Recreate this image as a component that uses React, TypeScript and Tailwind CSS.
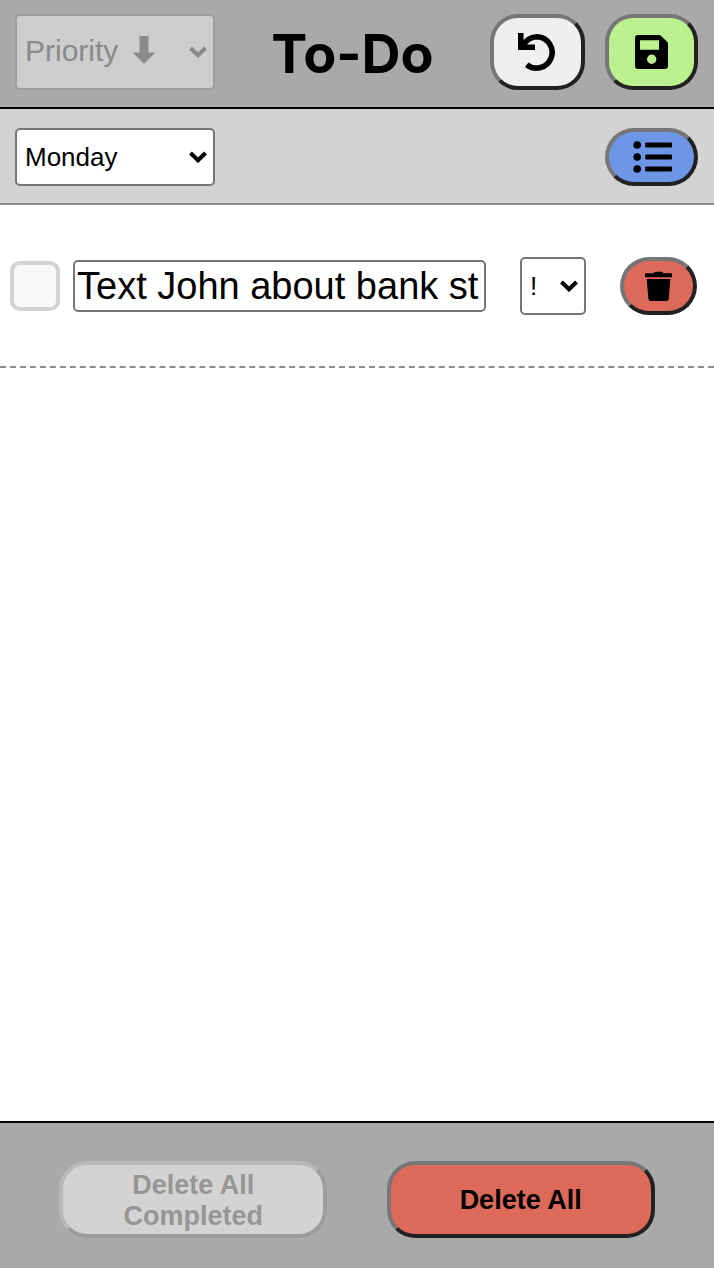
import { useState } from "react";
import type { ReactNode } from "react";

const outset =
  "flex items-center justify-center border-4 border-t-[#767676] border-l-[#767676] border-r-[#212121] border-b-[#212121]";

function Chevron() {
  return (
    <svg
      viewBox="0 0 18 12"
      aria-hidden="true"
      className="pointer-events-none absolute top-1/2 right-2 h-3 w-[18px] -translate-y-1/2"
    >
      <path d="M1.5 2 L9 9.3 L16.5 2" fill="none" stroke="currentColor" strokeWidth="4" />
    </svg>
  );
}

function DownArrow() {
  return (
    <svg
      viewBox="0 0 22 28"
      aria-hidden="true"
      className="pointer-events-none absolute top-[22px] left-[118px] h-7 w-[22px]"
    >
      <path d="M6.500 0 H15.500 V16.500 H22 L11 28 L0 16.500 H6.500 Z" fill="currentColor" />
    </svg>
  );
}

function UndoIcon() {
  return (
    <svg viewBox="0 0 38 38" className="h-[38px] w-[38px]" aria-hidden="true">
      <path
        d="M4 14 C7.500 7.500 12.500 3.700 19.300 3.700 A15.700 15.700 0 1 1 8.700 31.700"
        fill="none"
        stroke="currentColor"
        strokeWidth="5.600"
      />
      <path d="M0 0 H5.600 V11.500 H17 V17 H0 Z" fill="currentColor" />
    </svg>
  );
}

function SaveIcon() {
  return (
    <svg viewBox="0 0 33 34" className="h-[34px] w-[33px]" aria-hidden="true">
      <path
        fillRule="evenodd"
        fill="currentColor"
        d="M3 0 H24 Q25.300 0 26.200 0.900 L32.100 6.800 Q33 7.700 33 9 V31 A3 3 0 0 1 30 34 H3 A3 3 0 0 1 0 31 V3 A3 3 0 0 1 3 0 Z M5 5.300 V14.700 H24 V5.300 Z M16.700 19.500 A4.700 4.700 0 1 0 16.700 28.900 A4.700 4.700 0 1 0 16.700 19.500 Z"
      />
    </svg>
  );
}

function ListIcon() {
  return (
    <svg viewBox="0 0 40 32" className="h-8 w-10" aria-hidden="true" fill="currentColor">
      <circle cx="5.200" cy="4" r="3.800" />
      <circle cx="5.200" cy="16" r="3.800" />
      <circle cx="5.200" cy="28" r="3.800" />
      <rect x="13.300" y="1.500" width="26.700" height="5" rx="0.800" />
      <rect x="13.300" y="13.500" width="26.700" height="5" rx="0.800" />
      <rect x="13.300" y="25.500" width="26.700" height="5" rx="0.800" />
    </svg>
  );
}

function TrashIcon() {
  return (
    <svg viewBox="0 0 27 30" className="h-[30px] w-[27px]" aria-hidden="true" fill="currentColor">
      <path d="M1 2.300 H8.500 Q9.200 0.800 10.500 0.800 H16.500 Q17.800 0.800 18.500 2.300 H26 Q27 2.300 27 3.300 V6.200 H0 V3.300 Q0 2.300 1 2.300 Z" />
      <path d="M1.700 8 H25.300 L23.800 27.500 Q23.500 30 21.200 30 H6 Q3.700 30 3.400 27.500 Z" />
    </svg>
  );
}

function IconButton({ label, className, children }: { label: string; className: string; children: ReactNode }) {
  return (
    <button type="button" aria-label={label} className={`${outset} ${className}`}>
      {children}
    </button>
  );
}

export default function App() {
  const [text, setText] = useState("Text John about bank st");

  return (
    <div className="flex min-h-screen flex-col bg-white font-['Liberation_Sans',Arial,sans-serif] text-black">
      <header className="flex items-center justify-between border-b-2 border-black bg-[#a9a9a9] pt-[14px] pr-4 pb-[17px] pl-[15px]">
        <div className="relative w-[200px] text-[#8a8a8a]">
          <select
            aria-label="Sort by"
            disabled
            className="h-[76px] w-full appearance-none rounded-[5px] border-2 border-[#9e9e9e] bg-[#cdcdcd] pb-1 pl-2 text-[30px] opacity-100"
          >
            <option>Priority</option>
          </select>
          <DownArrow />
          <Chevron />
        </div>
        <h1 className="pt-1 font-[Inter,sans-serif] text-[54px] leading-[72px] font-bold">To-Do</h1>
        <div className="flex gap-5">
          <IconButton label="Undo" className="h-[76px] w-[95px] rounded-[28px] bg-[#efefef]">
            <UndoIcon />
          </IconButton>
          <IconButton label="Save" className="h-[76px] w-[93px] rounded-[28px] bg-[#bbf28f]">
            <SaveIcon />
          </IconButton>
        </div>
      </header>

      <nav className="flex items-center justify-between border-b-2 border-[#8c8c8c] bg-[#d3d3d3] pt-[19px] pr-4 pb-[17px] pl-[15px]">
        <div className="relative w-[200px]">
          <select
            aria-label="Day"
            className="h-[58px] w-full appearance-none rounded-[5px] border-2 border-[#767676] bg-white pl-2 text-[26px]"
          >
            <option>Monday</option>
          </select>
          <Chevron />
        </div>
        <IconButton label="Lists" className="h-[58px] w-[93px] rounded-[29px] bg-[#6e96e6]">
          <ListIcon />
        </IconButton>
      </nav>

      <main className="flex-1">
        <ul>
          <li className="flex items-center border-b-2 border-dashed border-[#8c8c8c] pt-[52px] pb-[51px] pr-[17px] pl-[10px]">
            <input
              type="checkbox"
              aria-label="Completed"
              className="h-[50px] w-[50px] shrink-0 appearance-none rounded-[10px] border-4 border-[#d3d3d3] bg-[#f8f8f8]"
            />
            <input
              type="text"
              aria-label="Task"
              value={text}
              onChange={(e) => setText(e.target.value)}
              className="ml-[13px] h-[52px] min-w-0 flex-1 rounded-[5px] border-2 border-[#767676] bg-white px-[2px] text-[38px]"
            />
            <div className="relative ml-[34px] w-[66px] shrink-0">
              <select
                aria-label="Task priority"
                className="h-[58px] w-full appearance-none rounded-[5px] border-2 border-[#767676] bg-white pl-2 text-[26px]"
              >
                <option>!</option>
              </select>
              <Chevron />
            </div>
            <IconButton label="Delete task" className="ml-[34px] h-[58px] w-[77px] shrink-0 rounded-[29px] bg-[#dd695a]">
              <TrashIcon />
            </IconButton>
          </li>
        </ul>
      </main>

      <footer className="flex justify-evenly border-t-2 border-black bg-[#a9a9a9] pt-[38px] pb-[30px] text-[27px] leading-[31px] font-bold">
        <button
          type="button"
          disabled
          className="h-[77px] w-[268px] rounded-[28px] border-4 border-t-[#b8b8b8] border-r-[#9c9c9c] border-b-[#9c9c9c] border-l-[#b8b8b8] bg-[#d3d3d3] px-8 pt-0.5 text-[#969696]"
        >
          Delete All Completed
        </button>
        <button type="button" className={`${outset} h-[77px] w-[268px] rounded-[28px] bg-[#dd695a] pt-0.5`}>
          Delete All
        </button>
      </footer>
    </div>
  );
}
